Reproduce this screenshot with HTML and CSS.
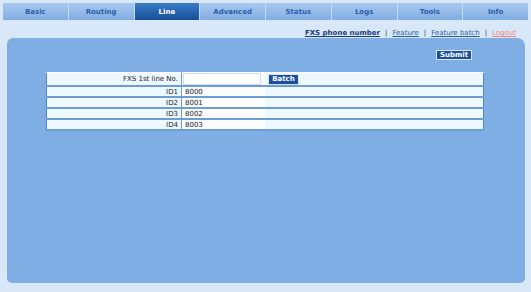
FILE: index.html
```html
<!DOCTYPE html>
<html lang="en">
<head>
    <meta charset="UTF-8">
    <title>Line</title>
    <link rel="stylesheet" href="styles.css">
</head>
<body>
    <ul class="nav">
        <li>Basic</li>
        <li>Routing</li>
        <li class="active">Line</li>
        <li>Advanced</li>
        <li>Status</li>
        <li>Logs</li>
        <li>Tools</li>
        <li>Info</li>
    </ul>

    <div class="sublinks">
        <a href="#" class="current">FXS phone number</a>
        <span class="sep">|</span>
        <a href="#">Feature</a>
        <span class="sep">|</span>
        <a href="#">Feature batch</a>
        <span class="sep">|</span>
        <a href="#" class="logout">Logout</a>
    </div>

    <div class="panel">
        <div class="submit-row">
            <button class="btn">Submit</button>
        </div>

        <table class="grid">
            <tr>
                <td class="label">FXS 1st line No.</td>
                <td class="val"><input type="text" class="field"></td>
                <td class="extra"><button class="btn btn-batch">Batch</button></td>
            </tr>
            <tr>
                <td class="label">ID1</td>
                <td class="val">8000</td>
                <td class="extra"></td>
            </tr>
            <tr>
                <td class="label">ID2</td>
                <td class="val">8001</td>
                <td class="extra"></td>
            </tr>
            <tr>
                <td class="label">ID3</td>
                <td class="val">8002</td>
                <td class="extra"></td>
            </tr>
            <tr>
                <td class="label">ID4</td>
                <td class="val">8003</td>
                <td class="extra"></td>
            </tr>
        </table>
    </div>
</body>
</html>
```
FILE: styles.css
```css
body {
    margin: 0;
    background: #d9e8f8;
    font-family: "DejaVu Sans", Verdana, sans-serif;
    font-size: 7px;
    color: #222;
}

/* top menu */
.nav {
    display: flex;
    list-style: none;
    margin: 3px 3px 0 3px;
    padding: 0;
    height: 17px;
}
.nav li {
    flex: 1;
    display: flex;
    align-items: center;
    justify-content: center;
    font-weight: bold;
    color: #2b5ea8;
    background: linear-gradient(#a9c9f0, #80ade3);
    border-right: 1px solid #c6dcf5;
}
.nav li:last-child { border-right: none; }
.nav li.active {
    color: #fff;
    background: linear-gradient(#3a7cc8, #174d95);
}

/* links above the panel */
.sublinks {
    display: flex;
    justify-content: flex-end;
    align-items: center;
    gap: 5px;
    height: 18px;
    padding: 8px 15px 0 0;
    box-sizing: border-box;
}
.sublinks a { color: #2a5aa8; }
.sublinks a.current { color: #1d3a78; font-weight: bold; }
.sublinks a.logout { color: #f08474; }
.sublinks .sep { color: #444; }

.panel {
    margin: 0 6px 0 7px;
    height: 245px;
    background: #7eaee4;
    border-radius: 6px 8px 5px 5px;
    padding-top: 12px;
    box-sizing: border-box;
}

.submit-row {
    display: flex;
    justify-content: flex-end;
    padding-right: 53px;
    height: 10px;
}

.btn {
    font-family: inherit;
    font-size: 7px;
    font-weight: bold;
    color: #fff;
    background: #1c4fa2;
    border: 1px solid #d8e6f8;
    padding: 0;
    width: 36px;
    height: 10px;
    line-height: 8px;
}

.grid {
    margin: 12px 41px 0 39px;
    width: 438px;
    border-collapse: collapse;
    border-left: 1px solid #4f86cf;
    border-right: 1px solid #4f86cf;
}
.grid td {
    height: 9px;
    padding: 0 3px;
    background: #eef8ff;
    border-bottom: 2px solid #6c9cda;
    border-top: 1px solid #fff;
}
.grid td.label { text-align: right; width: 128px; border-right: 1px solid #6c9cda; }
.grid td.val { background: #fbfdff; width: 76px; }
.grid td.extra { border-left: 1px solid #fff; }
.field {
    width: 76px;
    height: 10px;
    border: 1px solid #d0ddea;
    background: #fff;
    padding: 0;
    margin: 0 0 0 -2px;
    display: block;
}
.btn-batch { width: 31px; height: 11px; display: block; }
```
